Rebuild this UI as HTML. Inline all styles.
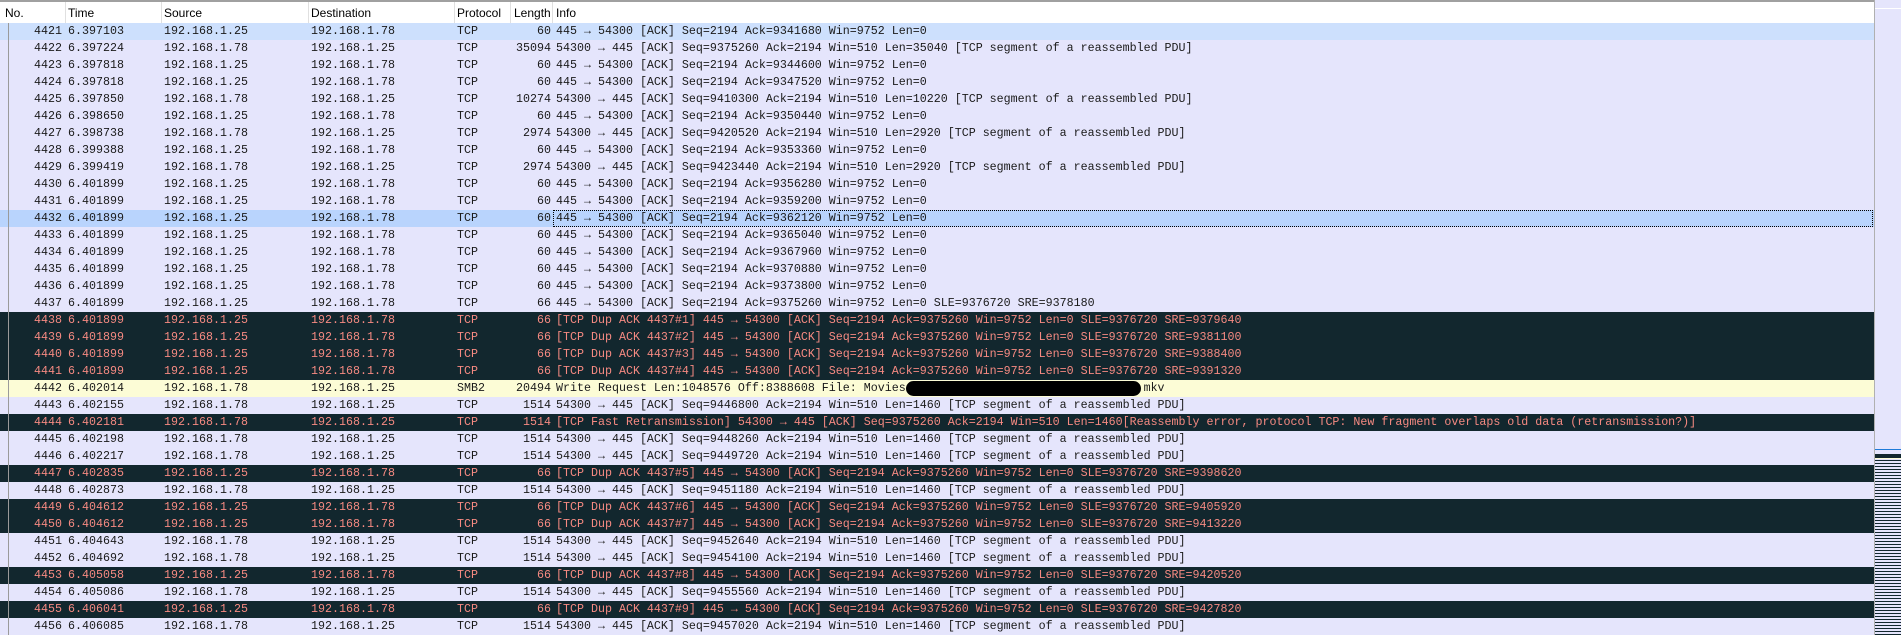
<!DOCTYPE html>
<html><head><meta charset="utf-8"><style>
body{margin:0;width:1901px;height:635px;overflow:hidden;background:#e5e5fc;position:relative;font-family:"Liberation Mono",monospace;}
#hdr{position:absolute;left:0;top:0;width:1874px;height:21px;background:#fff;border-top:2px solid #a0a0a0;font-family:"Liberation Sans",sans-serif;font-size:12px;color:#000}
#hdr span{position:absolute;top:4px}
#hdr i{position:absolute;top:0;width:1px;height:21px;background:#e0e0e0}
.r{position:absolute;left:0;width:1874px;height:17px;font-size:11.66px;line-height:17px;color:#1a1a1a;white-space:pre;background:#e5e5fc}
.r span{position:absolute;top:0}
.d{background:#12272e;color:#f68a82}
.y{background:#fcfcd6}
.h{background:#cde0fd}
.s{background:#b9d4fd}
.r .n{right:calc(1874px - 62px);text-align:right}
.r .t{left:68px}.r .sr{left:164px}.r .ds{left:311px}.r .p{left:457px}
.r .l{right:calc(1874px - 551px);text-align:right}.r .i{left:556px}
.tree{position:absolute;left:8px;top:23px;width:1px;height:612px;background:#9a9a9a}
#sep{position:absolute;left:1874px;top:0;width:1px;height:635px;background:#b0b0b0}
#mm{position:absolute;left:1875px;top:0;width:26px;height:635px;background:#e5e5fc}
</style></head><body>
<div id="hdr">
<span style="left:5px">No.</span><i style="left:65px"></i>
<span style="left:68px">Time</span><i style="left:161px"></i>
<span style="left:164px">Source</span><i style="left:308px"></i>
<span style="left:311px">Destination</span><i style="left:454px"></i>
<span style="left:457px">Protocol</span><i style="left:510px"></i>
<span style="left:514px">Length</span><i style="left:552px"></i>
<span style="left:556px">Info</span>
</div>
<div id="rows"></div>
<div class="tree"></div>
<div id="sep"></div>
<div id="mm">
<div style="position:absolute;left:0;top:8px;width:26px;height:1px;background:#fff"></div>
<div style="position:absolute;left:0;top:449px;width:26px;height:1px;background:#1e7ad8"></div>
<div style="position:absolute;left:0;top:454px;width:26px;height:4px;background:#12272e"></div>
<div style="position:absolute;left:0;top:458px;width:26px;height:1px;background:#fcfcd6"></div>
<div style="position:absolute;left:0;top:460px;width:26px;height:175px;background:repeating-linear-gradient(#12272e 0 1px,#e5e5fc 1px 3px)"></div>
</div>
<script>
var A='192.168.1.25',B='192.168.1.78';
var rows=[
['h','4421','6.397103',A,B,'TCP','60','445 → 54300 [ACK] Seq=2194 Ack=9341680 Win=9752 Len=0'],
['','4422','6.397224',B,A,'TCP','35094','54300 → 445 [ACK] Seq=9375260 Ack=2194 Win=510 Len=35040 [TCP segment of a reassembled PDU]'],
['','4423','6.397818',A,B,'TCP','60','445 → 54300 [ACK] Seq=2194 Ack=9344600 Win=9752 Len=0'],
['','4424','6.397818',A,B,'TCP','60','445 → 54300 [ACK] Seq=2194 Ack=9347520 Win=9752 Len=0'],
['','4425','6.397850',B,A,'TCP','10274','54300 → 445 [ACK] Seq=9410300 Ack=2194 Win=510 Len=10220 [TCP segment of a reassembled PDU]'],
['','4426','6.398650',A,B,'TCP','60','445 → 54300 [ACK] Seq=2194 Ack=9350440 Win=9752 Len=0'],
['','4427','6.398738',B,A,'TCP','2974','54300 → 445 [ACK] Seq=9420520 Ack=2194 Win=510 Len=2920 [TCP segment of a reassembled PDU]'],
['','4428','6.399388',A,B,'TCP','60','445 → 54300 [ACK] Seq=2194 Ack=9353360 Win=9752 Len=0'],
['','4429','6.399419',B,A,'TCP','2974','54300 → 445 [ACK] Seq=9423440 Ack=2194 Win=510 Len=2920 [TCP segment of a reassembled PDU]'],
['','4430','6.401899',A,B,'TCP','60','445 → 54300 [ACK] Seq=2194 Ack=9356280 Win=9752 Len=0'],
['','4431','6.401899',A,B,'TCP','60','445 → 54300 [ACK] Seq=2194 Ack=9359200 Win=9752 Len=0'],
['s','4432','6.401899',A,B,'TCP','60','445 → 54300 [ACK] Seq=2194 Ack=9362120 Win=9752 Len=0'],
['','4433','6.401899',A,B,'TCP','60','445 → 54300 [ACK] Seq=2194 Ack=9365040 Win=9752 Len=0'],
['','4434','6.401899',A,B,'TCP','60','445 → 54300 [ACK] Seq=2194 Ack=9367960 Win=9752 Len=0'],
['','4435','6.401899',A,B,'TCP','60','445 → 54300 [ACK] Seq=2194 Ack=9370880 Win=9752 Len=0'],
['','4436','6.401899',A,B,'TCP','60','445 → 54300 [ACK] Seq=2194 Ack=9373800 Win=9752 Len=0'],
['','4437','6.401899',A,B,'TCP','66','445 → 54300 [ACK] Seq=2194 Ack=9375260 Win=9752 Len=0 SLE=9376720 SRE=9378180'],
['d','4438','6.401899',A,B,'TCP','66','[TCP Dup ACK 4437#1] 445 → 54300 [ACK] Seq=2194 Ack=9375260 Win=9752 Len=0 SLE=9376720 SRE=9379640'],
['d','4439','6.401899',A,B,'TCP','66','[TCP Dup ACK 4437#2] 445 → 54300 [ACK] Seq=2194 Ack=9375260 Win=9752 Len=0 SLE=9376720 SRE=9381100'],
['d','4440','6.401899',A,B,'TCP','66','[TCP Dup ACK 4437#3] 445 → 54300 [ACK] Seq=2194 Ack=9375260 Win=9752 Len=0 SLE=9376720 SRE=9388400'],
['d','4441','6.401899',A,B,'TCP','66','[TCP Dup ACK 4437#4] 445 → 54300 [ACK] Seq=2194 Ack=9375260 Win=9752 Len=0 SLE=9376720 SRE=9391320'],
['y','4442','6.402014',B,A,'SMB2','20494','Write Request Len:1048576 Off:8388608 File: Movies                                  mkv'],
['','4443','6.402155',B,A,'TCP','1514','54300 → 445 [ACK] Seq=9446800 Ack=2194 Win=510 Len=1460 [TCP segment of a reassembled PDU]'],
['d','4444','6.402181',B,A,'TCP','1514','[TCP Fast Retransmission] 54300 → 445 [ACK] Seq=9375260 Ack=2194 Win=510 Len=1460[Reassembly error, protocol TCP: New fragment overlaps old data (retransmission?)]'],
['','4445','6.402198',B,A,'TCP','1514','54300 → 445 [ACK] Seq=9448260 Ack=2194 Win=510 Len=1460 [TCP segment of a reassembled PDU]'],
['','4446','6.402217',B,A,'TCP','1514','54300 → 445 [ACK] Seq=9449720 Ack=2194 Win=510 Len=1460 [TCP segment of a reassembled PDU]'],
['d','4447','6.402835',A,B,'TCP','66','[TCP Dup ACK 4437#5] 445 → 54300 [ACK] Seq=2194 Ack=9375260 Win=9752 Len=0 SLE=9376720 SRE=9398620'],
['','4448','6.402873',B,A,'TCP','1514','54300 → 445 [ACK] Seq=9451180 Ack=2194 Win=510 Len=1460 [TCP segment of a reassembled PDU]'],
['d','4449','6.404612',A,B,'TCP','66','[TCP Dup ACK 4437#6] 445 → 54300 [ACK] Seq=2194 Ack=9375260 Win=9752 Len=0 SLE=9376720 SRE=9405920'],
['d','4450','6.404612',A,B,'TCP','66','[TCP Dup ACK 4437#7] 445 → 54300 [ACK] Seq=2194 Ack=9375260 Win=9752 Len=0 SLE=9376720 SRE=9413220'],
['','4451','6.404643',B,A,'TCP','1514','54300 → 445 [ACK] Seq=9452640 Ack=2194 Win=510 Len=1460 [TCP segment of a reassembled PDU]'],
['','4452','6.404692',B,A,'TCP','1514','54300 → 445 [ACK] Seq=9454100 Ack=2194 Win=510 Len=1460 [TCP segment of a reassembled PDU]'],
['d','4453','6.405058',A,B,'TCP','66','[TCP Dup ACK 4437#8] 445 → 54300 [ACK] Seq=2194 Ack=9375260 Win=9752 Len=0 SLE=9376720 SRE=9420520'],
['','4454','6.405086',B,A,'TCP','1514','54300 → 445 [ACK] Seq=9455560 Ack=2194 Win=510 Len=1460 [TCP segment of a reassembled PDU]'],
['d','4455','6.406041',A,B,'TCP','66','[TCP Dup ACK 4437#9] 445 → 54300 [ACK] Seq=2194 Ack=9375260 Win=9752 Len=0 SLE=9376720 SRE=9427820'],
['','4456','6.406085',B,A,'TCP','1514','54300 → 445 [ACK] Seq=9457020 Ack=2194 Win=510 Len=1460 [TCP segment of a reassembled PDU]']
];
var h='';
rows.forEach(function(r,k){
var y=23+k*17;
h+='<div class="r '+r[0]+'" style="top:'+y+'px"><span class="n">'+r[1]+'</span><span class="t">'+r[2]+'</span><span class="sr">'+r[3]+'</span><span class="ds">'+r[4]+'</span><span class="p">'+r[5]+'</span><span class="l">'+r[6]+'</span><span class="i">'+r[7]+'</span>';
if(r[0]=='s')h+='<div style="position:absolute;left:553px;top:0;width:1318px;height:15px;border:1px dotted #000"></div>';
if(r[0]=='y')h+='<div style="position:absolute;left:906px;top:1px;width:235px;height:15px;border-radius:8px;background:#000"></div>';
h+='</div>';
});
document.getElementById('rows').innerHTML=h;
</script>
</body></html>
